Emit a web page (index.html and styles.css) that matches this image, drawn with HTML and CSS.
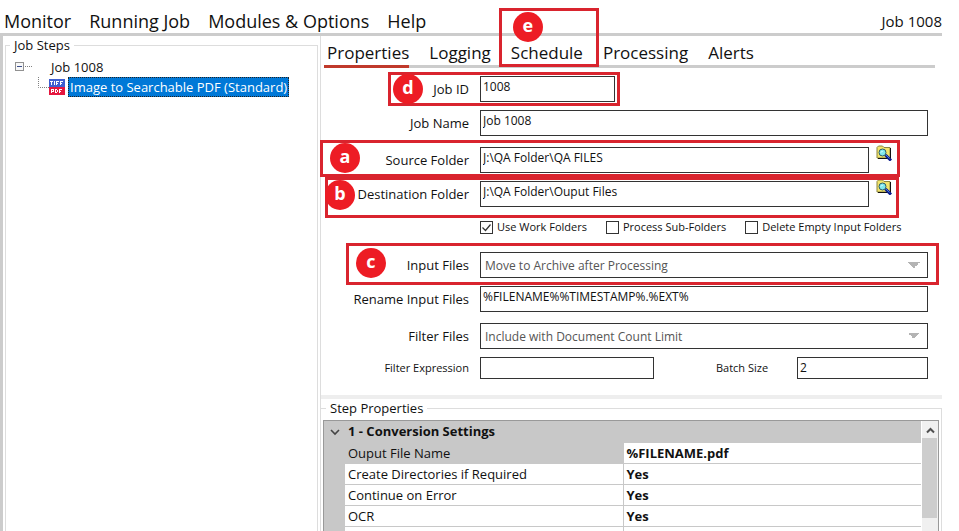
FILE: index.html
```html
<!DOCTYPE html>
<html lang="en">
<head>
    <meta charset="UTF-8">
    <meta name="viewport" content="width=device-width, initial-scale=1.0">
    <title>Job 1008</title>
    <link rel="stylesheet" href="styles.css">
</head>
<body>

    <header class="menu-bar">
        <nav class="menu">
            <button type="button">Monitor</button>
            <button type="button">Running Job</button>
            <button type="button">Modules &amp; Options</button>
            <button type="button">Help</button>
        </nav>
        <span class="job-title">Job 1008</span>
    </header>

    <div class="workspace">
        <fieldset class="job-steps">
            <legend>Job Steps</legend>
            <ul class="tree">
                <li class="tree-root">
                    <svg class="tree-toggle" width="17" height="11" viewBox="0 0 17 11">
                        <rect x="0.5" y="0.5" width="8" height="8" fill="#f8f8f8" stroke="#919191"/>
                        <path d="M2 4.5h5" stroke="#3c4f8c"/>
                        <path d="M10 4.5h7" stroke="#808080" stroke-dasharray="1 1"/>
                    </svg>
                    <span>Job 1008</span>
                </li>
                <li class="tree-item">
                    <svg class="tree-line" width="11" height="20" viewBox="0 0 11 20">
                        <path d="M0.5 0v10.5H11" fill="none" stroke="#808080" stroke-dasharray="1 1"/>
                    </svg>
                    <svg class="tiff-icon" width="16" height="16" viewBox="0 0 16 16" shape-rendering="crispEdges">
                        <rect width="16" height="8" fill="#3f5fd0"/>
                        <rect y="8" width="16" height="8" fill="#e5173f"/>
                        <g fill="#fff">
                            <path d="M1 2h3v1H1zM2 3h1v3H2zM5 2h1v4H5zM7 2h3v1H7zM7 3h1v3H7zM8 4h1v1H8zM11 2h3v1h-3zM11 3h1v3h-1zM12 4h1v1h-1z"/>
                            <path d="M2 10h3v1H2zM2 11h1v3H2zM4 11h1v1H4zM3 12h2v1H3zM6 10h2v1H6zM6 11h1v3H6zM8 11h1v2H8zM7 13h1v1H7zM10 10h3v1h-3zM10 11h1v3h-1zM11 12h1v1h-1z"/>
                        </g>
                    </svg>
                    <button type="button" class="tree-selected">Image to Searchable PDF (Standard)</button>
                </li>
            </ul>
        </fieldset>

        <main class="details">
            <nav class="tabs">
                <button type="button" class="active">Properties</button>
                <button type="button">Logging</button>
                <button type="button">Schedule<span class="mark mark-e"><b class="badge">e</b></span></button>
                <button type="button">Processing</button>
                <button type="button">Alerts</button>
            </nav>

            <form class="properties">
                <div class="row">
                    <label for="job-id">Job ID</label>
                    <input type="text" id="job-id" class="short" value="1008">
                    <span class="mark mark-d"><b class="badge">d</b></span>
                </div>
                <div class="row">
                    <label for="job-name">Job Name</label>
                    <input type="text" id="job-name" value="Job 1008">
                </div>
                <div class="row spaced">
                    <label for="source">Source Folder</label>
                    <input type="text" id="source" value="J:\QA Folder\QA FILES">
                    <button type="button" class="browse" aria-label="Browse source folder">
                        <svg width="16" height="16" viewBox="0 0 16 16"><use href="#folder-search"/></svg>
                    </button>
                    <span class="mark mark-a"><b class="badge">a</b></span>
                </div>
                <div class="row">
                    <label for="destination">Destination Folder</label>
                    <input type="text" id="destination" value="J:\QA Folder\Ouput Files">
                    <button type="button" class="browse" aria-label="Browse destination folder">
                        <svg width="16" height="16" viewBox="0 0 16 16"><use href="#folder-search"/></svg>
                    </button>
                    <span class="mark mark-b"><b class="badge">b</b></span>
                </div>
                <div class="checks">
                    <label><input type="checkbox" checked>Use Work Folders</label>
                    <label><input type="checkbox">Process Sub-Folders</label>
                    <label><input type="checkbox">Delete Empty Input Folders</label>
                </div>
                <div class="row">
                    <label for="input-files">Input Files</label>
                    <select id="input-files">
                        <option>Move to Archive after Processing</option>
                    </select>
                    <span class="mark mark-c"><b class="badge">c</b></span>
                </div>
                <div class="row">
                    <label for="rename">Rename Input Files</label>
                    <input type="text" id="rename" value="%FILENAME%%TIMESTAMP%.%EXT%">
                </div>
                <div class="row spaced">
                    <label for="filter">Filter Files</label>
                    <select id="filter">
                        <option>Include with Document Count Limit</option>
                    </select>
                </div>
                <div class="row small">
                    <label for="expression">Filter Expression</label>
                    <input type="text" id="expression">
                    <label for="batch">Batch Size</label>
                    <input type="text" id="batch" value="2">
                </div>
            </form>

            <fieldset class="step-properties">
                <legend>Step Properties</legend>
                <div class="grid-box">
                    <table>
                        <colgroup>
                            <col class="col-gutter">
                            <col class="col-name">
                            <col>
                        </colgroup>
                        <tbody>
                            <tr class="group">
                                <th class="gutter">
                                    <svg width="10" height="8" viewBox="0 0 10 8"><path d="M1 2l4 4 4-4" fill="none" stroke="#444" stroke-width="1.6"/></svg>
                                </th>
                                <th colspan="2">1 - Conversion Settings</th>
                            </tr>
                            <tr class="current"><td class="gutter"></td><td>Ouput File Name</td><td class="value">%FILENAME.pdf</td></tr>
                            <tr><td class="gutter"></td><td>Create Directories if Required</td><td class="value">Yes</td></tr>
                            <tr><td class="gutter"></td><td>Continue on Error</td><td class="value">Yes</td></tr>
                            <tr><td class="gutter"></td><td>OCR</td><td class="value">Yes</td></tr>
                            <tr><td class="gutter"></td><td></td><td class="value"></td></tr>
                        </tbody>
                    </table>
                    <div class="scrollbar">
                        <button type="button" aria-label="Scroll up">
                            <svg width="9" height="7" viewBox="0 0 9 7"><path d="M1 5.5L4.5 2 8 5.5" fill="none" stroke="#505050" stroke-width="2"/></svg>
                        </button>
                        <div class="thumb"></div>
                    </div>
                </div>
            </fieldset>
        </main>
    </div>

    <svg width="0" height="0" class="symbols">
        <symbol id="folder-search" viewBox="0 0 16 16">
            <path d="M1 13V2.5L2.5 1h4L8 2.5h6V13z" fill="#f3e56b" stroke="#8a8440"/>
            <path d="M14.5 3v10.500H2" fill="none" stroke="#111"/>
            <path d="M9.5 10l5.500 5.500" stroke="#0a1a8c" stroke-width="3"/>
            <path d="M9.5 9.5l4 4" stroke="#3f7be0"/>
            <circle cx="6.5" cy="7.5" r="3.5" fill="#7fe9ee" stroke="#2c5a66"/>
            <path d="M5 7.5L6.5 6" stroke="#fff"/>
        </symbol>
    </svg>

</body>
</html>
```
FILE: styles.css
```css
* {
    box-sizing: border-box;
}

body {
    font-family: "Open Sans", "Noto Sans", sans-serif;
    font-size: 13px;
    color: #111;
    background-color: #fff;
    margin: 0;
    padding-right: 17px;
    height: 100vh;
    display: flex;
    flex-direction: column;
    overflow: hidden;
}

button,
input,
select {
    font-family: inherit;
    color: inherit;
}

button {
    background: none;
    border: none;
    padding: 0;
}

.symbols {
    position: absolute;
}

.menu-bar {
    display: flex;
    justify-content: space-between;
    align-items: flex-end;
    height: 36px;
    border-bottom: 3px solid #ccc;
    padding-left: 4px;
}

.menu {
    display: flex;
    gap: 18px;
}

.menu button {
    font-size: 18px;
    line-height: 24px;
}

.job-title {
    font-size: 15px;
    line-height: 24px;
}

.workspace {
    flex: 1;
    min-height: 0;
    display: grid;
    grid-template-columns: 317px 1fr;
    border-left: 3px solid #ccc;
}

.job-steps {
    border: 1px solid #ddd;
    border-bottom: none;
    margin: 0 2px;
    padding: 0;
    min-width: 0;
}

legend {
    font-size: 13px;
    line-height: 18px;
    padding: 0 4px;
    margin-left: 4px;
}

.tree {
    list-style: none;
    margin: 0;
    padding: 3px 0 0 9px;
}

.tree li {
    display: flex;
    align-items: center;
    height: 20px;
}

.tree-root {
    gap: 19px;
}

.tree-item {
    padding-left: 23px;
}

.tree-line {
    align-self: flex-start;
}

.tree-selected {
    margin-left: 3px;
    background-color: #0078d7;
    color: #fff;
    font-size: 13px;
    line-height: 18px;
    border: 1px dotted #e09040;
    outline: 1px dotted #222;
    outline-offset: -1px;
    padding: 0 1px;
    white-space: nowrap;
}

.details {
    border-left: 1px solid #ddd;
    display: flex;
    flex-direction: column;
    min-width: 0;
    min-height: 0;
}

.tabs {
    display: flex;
    margin: 0 7px 0 3px;
    border-bottom: 3px solid #ccc;
}

.tabs button {
    position: relative;
    font-size: 17px;
    line-height: 24px;
    padding: 5px 0 0;
    margin: 0 0 -3px 20px;
    border-bottom: 3px solid transparent;
}

.tabs .active {
    margin-left: 0;
    padding: 5px 0 0 3px;
    border-bottom-color: #c0392b;
}

.properties {
    display: flex;
    flex-direction: column;
    gap: 8px;
    padding: 8px 14px 16px 0;
    border-bottom: 4px solid #eee;
}

.row {
    position: relative;
    display: flex;
    align-items: center;
}

.row label {
    width: 148px;
    margin-right: 11px;
    text-align: right;
    font-size: 13px;
    line-height: 26px;
}

.row input,
.row select {
    flex: 1;
    min-width: 0;
    height: 26px;
    border: 1px solid #333;
    border-radius: 0;
    background-color: #fff;
    font-size: 12px;
    padding: 0 2px 6px;
}

.row .short {
    flex: none;
    width: 135px;
}

.row select {
    appearance: none;
    color: #555;
    padding: 0 4px;
    background-image: linear-gradient(to bottom right, #b4b4b4 50%, transparent 50%), linear-gradient(to bottom left, #b4b4b4 50%, transparent 50%);
    background-repeat: no-repeat;
    background-size: 6px 6px;
    background-position: right 7px center, right 13px center;
}

.spaced {
    margin-top: 3px;
}

.browse {
    align-self: flex-start;
    width: 16px;
    height: 16px;
    margin: -2px 36px 0 7px;
}

.checks {
    display: flex;
    gap: 19px;
    padding: 4px 0 9px 159px;
}

.checks label {
    display: flex;
    align-items: center;
    gap: 4px;
    font-size: 11px;
    line-height: 16px;
    white-space: nowrap;
}

.checks input {
    appearance: none;
    width: 13px;
    height: 13px;
    margin: 0;
    border: 1px solid #333;
}

.checks input:checked {
    background: url('data:image/svg+xml,<svg xmlns="http://www.w3.org/2000/svg" viewBox="0 0 11 11"><path d="M1.5 5.5l3 3 5-6" fill="none" stroke="%23333" stroke-width="1.2"/></svg>') center no-repeat;
}

.small label {
    font-size: 11px;
    line-height: 22px;
}

.small input {
    height: 22px;
    padding-bottom: 2px;
}

#expression {
    flex: 175 1 0;
}

#batch {
    flex: 130 1 0;
}

.small input + label {
    width: 114px;
    margin-right: 29px;
}

/* lettered callouts drawn over the form */
.mark {
    position: absolute;
    border: 3px solid #d9242e;
    pointer-events: none;
}

.badge {
    position: absolute;
    width: 30px;
    height: 30px;
    border-radius: 50%;
    background-color: #ed1c24;
    color: #fff;
    font-size: 18px;
    font-weight: bold;
    line-height: 26px;
    text-align: center;
}

.mark-a {
    inset: -7px 28px -4px -1px;
}

.mark-a .badge {
    left: 7px;
    top: 0;
}

.mark-b {
    inset: -4px 29px -11px 4px;
}

.mark-b .badge {
    left: -3px;
    top: 0;
}

.mark-c {
    inset: -9px -11px -7px 25px;
}

.mark-c .badge {
    left: 7px;
    top: 2px;
}

.mark-d {
    top: -4px;
    bottom: -4px;
    left: 67px;
    width: 232px;
}

.mark-d .badge {
    left: 2px;
    top: -1px;
}

.mark-e {
    inset: -28px -16px -2px -12px;
}

.mark-e .badge {
    left: 11px;
    top: 1px;
}

.step-properties {
    flex: 1;
    min-height: 0;
    min-width: 0;
    border: 1px solid #ddd;
    border-width: 1px 1px 0 0;
    margin: 0;
    padding: 3px 2px 0;
}

.step-properties legend {
    margin-left: 3px;
}

.grid-box {
    display: flex;
    height: 100%;
    border: 1px solid #999;
    border-bottom: none;
    overflow: hidden;
}

.grid-box table {
    flex: 1;
    width: 100%;
    align-self: flex-start;
    table-layout: fixed;
    border-collapse: collapse;
    background-color: #fff;
}

.col-gutter {
    width: 21px;
}

.col-name {
    width: 278px;
}

.grid-box td,
.grid-box th {
    height: 21px;
    padding: 0 3px;
    border-bottom: 1px solid #c8c8c8;
    font-size: 13px;
    line-height: 20px;
    text-align: left;
}

.grid-box .gutter {
    padding: 0;
    text-align: center;
    background-color: #c8c8c8;
}

.group,
.current td {
    background-color: #c8c8c8;
}

.grid-box .value {
    border-left: 1px solid #c8c8c8;
    background-color: #fff;
    font-weight: bold;
}

.scrollbar {
    width: 17px;
    background-color: #f0f0f0;
    border-left: 1px solid #fff;
}

.scrollbar button {
    display: block;
    width: 100%;
    height: 17px;
    line-height: 17px;
}

.scrollbar .thumb {
    height: 80px;
    margin-right: 1px;
    background-color: #cdcdcd;
}
```
